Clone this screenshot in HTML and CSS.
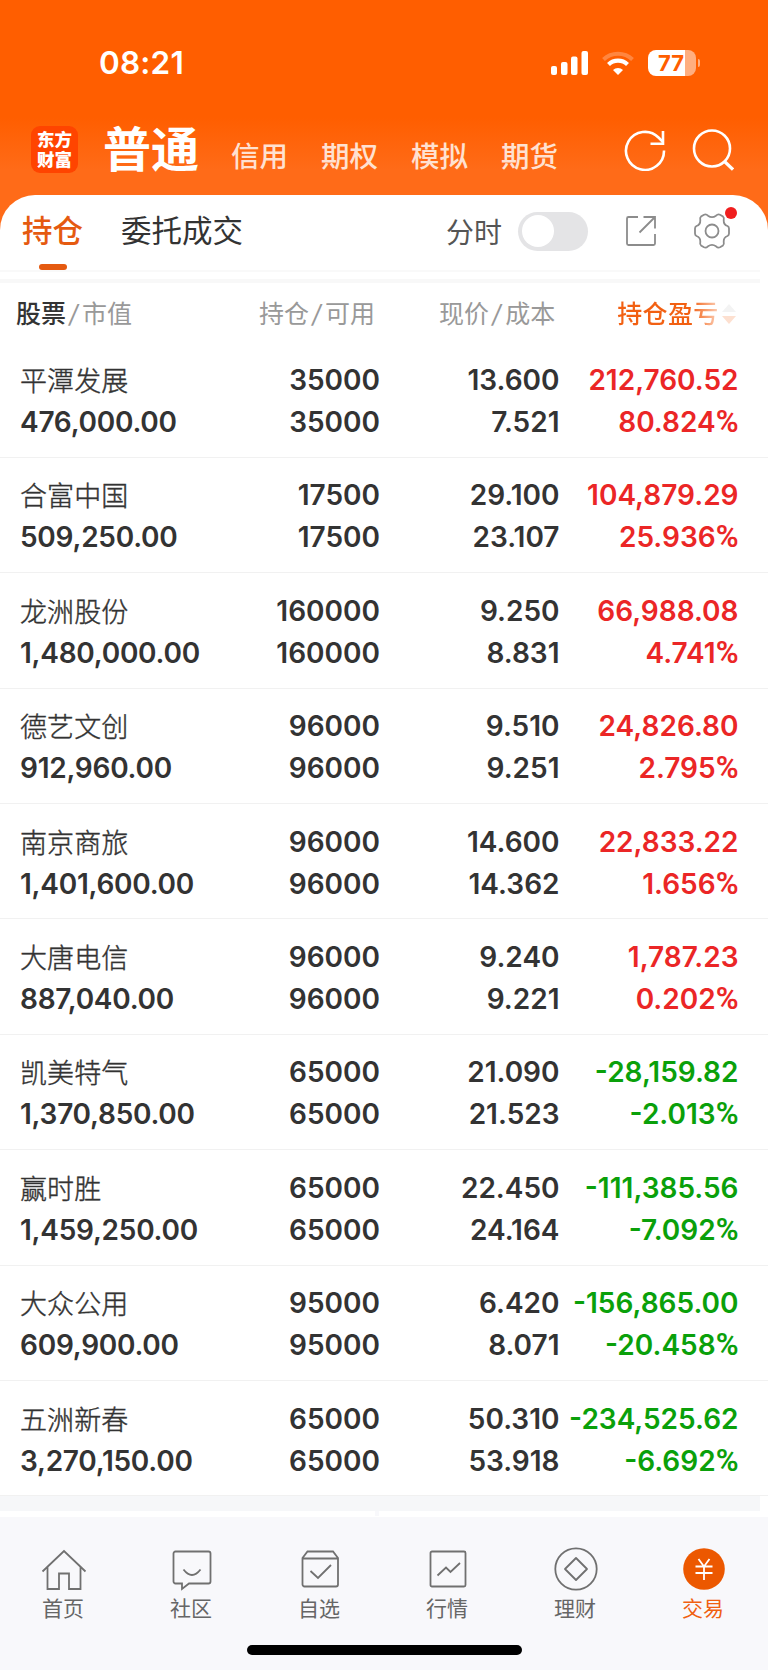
FILE: index.html
```
<!DOCTYPE html>
<html lang="zh-CN">

<head>
  <meta charset="UTF-8">
  <meta name="viewport" content="width=device-width, initial-scale=1.0">
  <title>持仓</title>
  <link rel="stylesheet" href="styles.css">
</head>

<body>
  <header>
    <div class="status">
      <time>08:21</time>
      <div class="status-icons">
        <svg width="37" height="24" viewBox="0 0 37 24" fill="#fff">
          <rect x="0" y="15" width="6" height="9" rx="2" />
          <rect x="10" y="11" width="6.500" height="13" rx="2" />
          <rect x="20" y="5.500" width="6.500" height="18.500" rx="2" />
          <rect x="30.500" y="0" width="6.500" height="24" rx="2" />
        </svg>
        <svg width="32" height="24" viewBox="0 0 32 24" fill="none" stroke="#fff">
          <path d="M1.500 8.500a21 21 0 0 1 29 0" stroke-width="4" opacity=".25" />
          <path d="M6.500 13.500a13.700 13.700 0 0 1 19 0" stroke-width="4.200" />
          <path d="M16 24l-5-5a7.200 7.200 0 0 1 10 0z" fill="#fff" stroke="none" />
        </svg>
        <div class="battery"><span>77</span></div>
      </div>
    </div>
    <nav class="accounts">
      <div class="logo">东方<br>财富</div>
      <a class="current">普通</a>
      <a>信用</a>
      <a>期权</a>
      <a>模拟</a>
      <a>期货</a>
      <svg class="refresh" width="42" height="42" viewBox="0 0 42 42" fill="none" stroke="#fff" stroke-width="2.600">
        <path d="M40 21.500A19 19 0 1 1 34.500 8.500L39 13" />
        <path d="M39 2v12.800H26.500" />
      </svg>
      <svg class="search" width="42" height="42" viewBox="0 0 42 42" fill="none" stroke="#fff" stroke-width="2.600">
        <circle cx="20" cy="19.500" r="18" />
        <path d="M32.500 32.500l8.500 8" stroke-width="3.200" />
      </svg>
    </nav>
  </header>

  <main>
    <div class="tabs">
      <a class="tab active">持仓</a>
      <a class="tab">委托成交</a>
      <span class="switch-label">分时</span>
      <span class="switch"></span>
      <svg class="share" width="32" height="32" viewBox="0 0 32 32" fill="none" stroke="#8c8c8c" stroke-width="1.800">
        <path d="M13 2H3.500A1.500 1.500 0 0 0 2 3.500v25A1.500 1.500 0 0 0 3.500 30h25a1.500 1.500 0 0 0 1.500-1.500V19" />
        <path d="M18.500 2H30v11.500M30 2L14.500 17.500" />
      </svg>
      <span class="settings">
        <svg width="38" height="38" viewBox="0 0 38 38" fill="none" stroke="#8c8c8c" stroke-width="1.800">
          <path d="M11 2.800Q13 1.800 15 3.700Q19 6.600 23 3.700Q25 1.800 27 2.800L30 4.600Q31.300 5.700 30.700 8.200Q30.500 12.600 34.500 14Q36 14.800 36 16.500V21.500Q36 23.200 34.500 24Q30.500 25.400 30.700 29.800Q31.300 32.300 30 33.400L27 35.200Q25 36.200 23 34.300Q19 31.400 15 34.300Q13 36.200 11 35.200L8 33.400Q6.700 32.300 7.300 29.800Q7.500 25.400 3.500 24Q2 23.200 2 21.500V16.500Q2 14.800 3.500 14Q7.500 12.600 7.300 8.200Q6.700 5.700 8 4.600Z" />
          <circle cx="19" cy="19" r="6.500" />
        </svg>
      </span>
    </div>

    <div class="columns">
      <span><b>股票</b><i>/</i>市值</span>
      <span>持仓<i>/</i>可用</span>
      <span>现价<i>/</i>成本</span>
      <span class="sorted">持仓盈亏</span>
      <svg class="sort" width="14" height="20" viewBox="0 0 14 20">
        <path d="M7 0l7 8H0z" fill="#f3f3f3" />
        <path d="M7 20l7-8H0z" fill="#fde0d0" />
      </svg>
    </div>

    <ul class="stocks">
      <li>
        <div><span class="name">平潭发展</span>476,000.00</div>
        <div>35000<br>35000</div>
        <div>13.600<br>7.521</div>
        <div class="up">212,760.52<br>80.824<span class="pct">%</span></div>
      </li>
      <li>
        <div><span class="name">合富中国</span>509,250.00</div>
        <div>17500<br>17500</div>
        <div>29.100<br>23.107</div>
        <div class="up">104,879.29<br>25.936<span class="pct">%</span></div>
      </li>
      <li>
        <div><span class="name">龙洲股份</span>1,480,000.00</div>
        <div>160000<br>160000</div>
        <div>9.250<br>8.831</div>
        <div class="up">66,988.08<br>4.741<span class="pct">%</span></div>
      </li>
      <li>
        <div><span class="name">德艺文创</span>912,960.00</div>
        <div>96000<br>96000</div>
        <div>9.510<br>9.251</div>
        <div class="up">24,826.80<br>2.795<span class="pct">%</span></div>
      </li>
      <li>
        <div><span class="name">南京商旅</span>1,401,600.00</div>
        <div>96000<br>96000</div>
        <div>14.600<br>14.362</div>
        <div class="up">22,833.22<br>1.656<span class="pct">%</span></div>
      </li>
      <li>
        <div><span class="name">大唐电信</span>887,040.00</div>
        <div>96000<br>96000</div>
        <div>9.240<br>9.221</div>
        <div class="up">1,787.23<br>0.202<span class="pct">%</span></div>
      </li>
      <li>
        <div><span class="name">凯美特气</span>1,370,850.00</div>
        <div>65000<br>65000</div>
        <div>21.090<br>21.523</div>
        <div class="down">-28,159.82<br>-2.013<span class="pct">%</span></div>
      </li>
      <li>
        <div><span class="name">赢时胜</span>1,459,250.00</div>
        <div>65000<br>65000</div>
        <div>22.450<br>24.164</div>
        <div class="down">-111,385.56<br>-7.092<span class="pct">%</span></div>
      </li>
      <li>
        <div><span class="name">大众公用</span>609,900.00</div>
        <div>95000<br>95000</div>
        <div>6.420<br>8.071</div>
        <div class="down">-156,865.00<br>-20.458<span class="pct">%</span></div>
      </li>
      <li>
        <div><span class="name">五洲新春</span>3,270,150.00</div>
        <div>65000<br>65000</div>
        <div>50.310<br>53.918</div>
        <div class="down">-234,525.62<br>-6.692<span class="pct">%</span></div>
      </li>
    </ul>
    <div class="list-end"></div>
    <div class="list-gap"><span></span></div>
  </main>

  <footer>
    <nav class="tabbar">
      <a>
        <svg width="46" height="46" viewBox="0 0 46 46">
          <path d="M1.500 24.500L23 4l21.500 20.500M6.500 20v22H18V26.500h10V42h11.500V20" />
        </svg>
        首页
      </a>
      <a>
        <svg width="46" height="46" viewBox="0 0 46 46">
          <path d="M6.500 4.500h33A2 2 0 0 1 41.500 6.500v28a2 2 0 0 1-2 2H20L13 42v-5.500H6.500a2 2 0 0 1-2-2v-28a2 2 0 0 1 2-2z" />
          <path d="M14.500 22.500q8.500 11 17 0" />
        </svg>
        社区
      </a>
      <a>
        <svg width="46" height="46" viewBox="0 0 46 46">
          <path d="M5.500 11l5-6.500h25.500l5 6.500v26.500a2 2 0 0 1-2 2h-31.500a2 2 0 0 1-2-2zM5.500 11.500h35.500" />
          <path d="M13.500 24l7.500 7L34 18" />
        </svg>
        自选
      </a>
      <a>
        <svg width="46" height="46" viewBox="0 0 46 46">
          <rect x="5.500" y="4.500" width="35" height="35" rx="1.500" />
          <path d="M12.500 28.500l8.500-8 4.500 4.500 9.500-9" />
        </svg>
        行情
      </a>
      <a>
        <svg width="46" height="46" viewBox="0 0 46 46">
          <circle cx="23" cy="22" r="20.700" />
          <path d="M23 11l11 11-11 11-11-11z" stroke-linejoin="round" />
        </svg>
        理财
      </a>
      <a class="active">
        <svg width="46" height="46" viewBox="0 0 46 46">
          <circle cx="23" cy="22" r="20.800" />
          <path d="M17.500 12l5.500 7.500 5.500-7.500M23 19.500V33M14.500 19.500h17M14.500 26h17" />
        </svg>
        交易
      </a>
    </nav>
    <div class="home-indicator"></div>
  </footer>
</body>

</html>
```
FILE: styles.css
```
* {
  box-sizing: border-box;
}

body {
  margin: 0;
  width: 768px;
  height: 1670px;
  background: #ff6b18;
  font-family: Inter, "Noto Sans CJK SC", sans-serif;
  color: #333;
}

header {
  height: 194.500px;
  background: linear-gradient(#ff5e00 118px, #ff6b18 170px);
  color: #fff;
}

.status {
  display: flex;
  justify-content: space-between;
  align-items: center;
  height: 118px;
  padding: 7px 72px 0 99px;
}

.status time {
  font-size: 31.500px;
  font-weight: 600;
  line-height: 40px;
  letter-spacing: .2px;
}

.status-icons {
  display: flex;
  align-items: center;
  gap: 14px;
}

.battery {
  position: relative;
  width: 48px;
  height: 26px;
  border-radius: 8px;
  background: linear-gradient(90deg, #fff 37px, #ffae80 37px);
  color: #ff5e00;
  font-size: 22px;
  font-weight: 700;
  line-height: 26px;
  padding-left: 10px;
}

.battery::after {
  content: '';
  position: absolute;
  left: 50px;
  top: 9px;
  width: 2px;
  height: 8px;
  border-radius: 0 3px 3px 0;
  background: #ffae80;
}

.accounts {
  display: flex;
  align-items: center;
  height: 63px;
  padding-left: 31px;
}

.logo {
  width: 47px;
  height: 47px;
  margin-right: 25px;
  padding-top: 4px;
  border-radius: 9px;
  background: #ff4400;
  font-size: 17.500px;
  font-weight: 900;
  line-height: 19.500px;
  text-align: center;
}

.accounts a {
  margin-right: 33px;
  padding-top: 15px;
  font-size: 28.500px;
  font-weight: 500;
  line-height: 34px;
  color: #ffe1d1;
}

.accounts .current {
  margin-right: 32px;
  padding: 0;
  font-size: 48px;
  font-weight: 700;
  line-height: 60px;
  color: #fff;
}

.refresh {
  margin-left: 33px;
}

.search {
  margin-left: 26px;
}

main {
  height: 1322.500px;
  border-radius: 35px 35px 0 0;
  background: #fff;
}

.tabs {
  display: flex;
  align-items: center;
  height: 75px;
  padding: 0 0 2px 22px;
  font-size: 30.500px;
}

.tab {
  position: relative;
  margin-right: 38px;
  line-height: 40px;
}

.tab.active {
  font-weight: 500;
  color: #e55a10;
}

.tab.active::after {
  content: '';
  position: absolute;
  left: 17px;
  top: 53px;
  width: 28px;
  height: 5.500px;
  border-radius: 3px;
  background: #e55a10;
}

.switch-label {
  margin-left: auto;
  font-size: 28px;
  color: #555;
}

.switch {
  width: 70px;
  height: 39px;
  margin-left: 16px;
  padding: 3.500px;
  border-radius: 20px;
  background: #e4e4e6;
}

.switch::before {
  content: '';
  display: block;
  width: 32px;
  height: 32px;
  border-radius: 50%;
  background: #fff;
}

.share {
  margin-left: 37px;
}

.settings {
  position: relative;
  height: 38px;
  margin: 0 37px 0 36px;
}

.settings::after {
  content: '';
  position: absolute;
  left: 32px;
  top: -5px;
  width: 12px;
  height: 12px;
  border-radius: 50%;
  background: #f01e1e;
}

.columns {
  display: flex;
  position: relative;
  align-items: center;
  height: 73px;
  margin-right: 8px;
  padding: 10px 0 0 16px;
  border-top: 2px solid #f9f9f9;
  font-size: 25px;
  color: #999;
}

.columns::before {
  content: '';
  position: absolute;
  left: 0;
  right: 0;
  top: 7px;
  height: 4px;
  background: #f8f8f8;
}

.columns b {
  font-weight: 500;
  color: #333;
}

.columns i {
  padding: 0 4px 0 3px;
}

.columns span {
  white-space: nowrap;
}

.columns span:nth-child(2) {
  margin-left: 127px;
}

.columns span:nth-child(3) {
  margin-left: 64px;
}

.columns .sorted {
  margin-left: 62px;
  background: linear-gradient(90deg, #f26012 74px, #fdd9c6 104px);
  background-clip: text;
  font-weight: 500;
  letter-spacing: .4px;
  color: transparent;
}

.sort {
  margin: 4px 0 0 3px;
}

.stocks {
  margin: 0;
  padding: 0;
  list-style-type: none;
}

.stocks li {
  display: grid;
  grid-template-columns: 200px 160px 179.500px 179px;
  height: 115.400px;
  padding: 16.500px 0 0 20px;
  border-bottom: 1px solid #f1f1f1;
  font-size: 28px;
  font-weight: 600;
  line-height: 42px;
  text-align: right;
}

.stocks li div:first-child {
  text-align: left;
  letter-spacing: -.25px;
}

/* Light alone is too thin at this size */
.stocks .name {
  display: block;
  height: 42px;
  padding-top: 2px;
  font-size: 27px;
  font-weight: 300;
  letter-spacing: .1px;
  -webkit-text-stroke: .4px #333;
}

.pct {
  font-family: Roboto, sans-serif;
  font-size: 31px;
  line-height: 1;
}

.up {
  color: #eb2626;
}

.down {
  color: #0aa00a;
}

.list-end {
  height: 15px;
  margin-right: 8px;
  background: #f6f7f9;
}

.list-gap span {
  display: block;
  width: 4px;
  height: 5px;
  margin-left: 375px;
  background: #f8f8fb;
}

footer {
  height: 153px;
  padding-top: 30px;
  background: #f8f8fb;
}

.tabbar {
  display: grid;
  grid-template-columns: repeat(6, 128px);
  margin-left: -1px;
}

.tabbar a {
  display: flex;
  flex-direction: column;
  align-items: center;
  font-size: 21px;
  line-height: 30px;
  color: #666;
}

.tabbar svg {
  margin: 0 0 1px 1px;
  fill: none;
  stroke: #707070;
  stroke-width: 1.800;
}

.tabbar .active {
  color: #f06010;
}

.active circle {
  fill: #ec5800;
  stroke: none;
}

.active path {
  stroke: #fff;
}

.home-indicator {
  width: 275px;
  height: 10px;
  margin: 21px auto 0;
  border-radius: 5px;
  background: #000;
}
```
